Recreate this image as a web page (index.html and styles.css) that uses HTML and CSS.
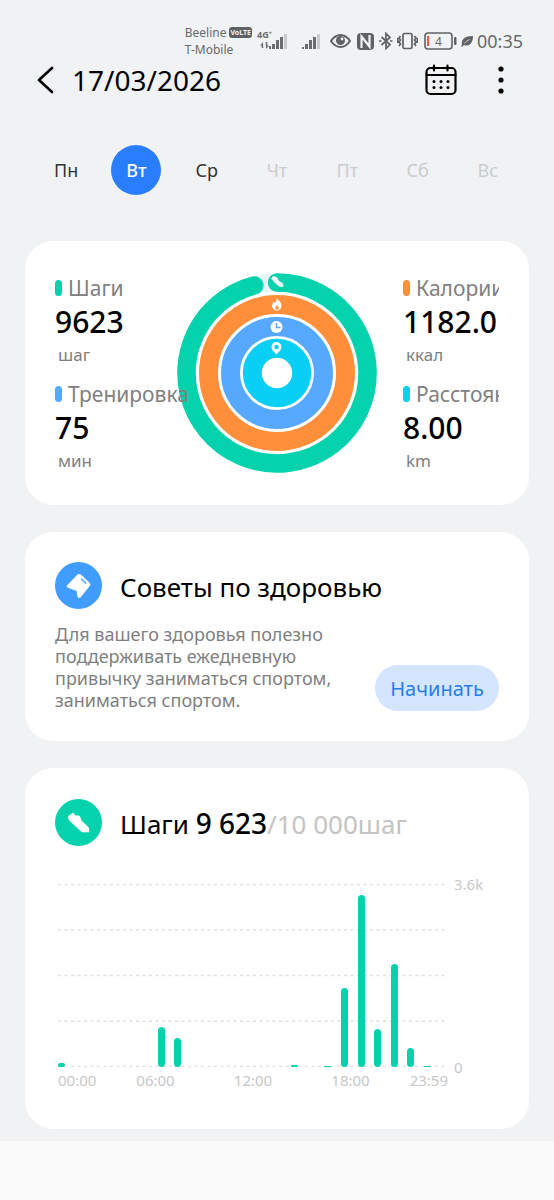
FILE: index.html
```html
<!DOCTYPE html>
<html lang="ru">
<head>
<meta charset="utf-8">
<meta name="viewport" content="width=device-width, initial-scale=1">
<title>Активность</title>
<link rel="stylesheet" href="styles.css">
</head>
<body>
<div class="screen">
  <div class="status">
    <div class="carriers">
      <div class="carrier">Beeline <span class="volte">VoLTE</span></div>
      <div class="carrier">T-Mobile</div>
    </div>
    <svg class="signal-main" width="32" height="24" viewBox="0 0 32 24" fill="#6b6c6e">
      <text class="net-label" x="0" y="9">4G⁺</text>
      <path d="M6 13l-3 3.500h1.700v2.500h1.600zM9 20l3-3.500h-1.700v-3.500H8.700z"/>
      <rect x="12" y="17" width="2" height="3"/><rect x="15" y="15" width="3" height="5"/><rect x="19" y="11" width="3" height="9"/><rect x="23" y="8" width="3" height="12"/><rect x="27" y="5" width="3" height="15" fill="#c9cacc"/>
    </svg>
    <svg class="signal-alt" width="18" height="24" viewBox="0 0 18 24" fill="#6b6c6e">
      <rect x="0" y="18" width="2" height="2"/><rect x="3" y="15" width="3" height="5"/><rect x="7" y="11" width="3" height="9"/><rect x="11" y="8" width="3" height="12"/><rect x="15" y="5" width="3" height="15" fill="#c9cacc"/>
    </svg>
    <svg class="eye" width="21" height="16" viewBox="0 0 21 16" fill="none" stroke="#606163" stroke-width="2"><path d="M1 8C4 3.500 7 2 10.500 2S17 3.500 20 8c-3 4.500-6 6-9.500 6S4 12.500 1 8z"/><circle cx="10.500" cy="7.500" r="4.500" fill="#606163" stroke="none"/><circle cx="12" cy="6" r="1.400" fill="#f1f2f4" stroke="none"/></svg>
    <svg class="nfc" width="17" height="17" viewBox="0 0 17 17"><rect x="0" y="0" width="17" height="17" rx="4" fill="#606163"/><path d="M4.500 15V3.500l8 10V2" fill="none" stroke="#f1f2f4" stroke-width="2.200"/></svg>
    <svg class="bt" width="14" height="18" viewBox="0 0 14 18" fill="none" stroke="#606163" stroke-width="1.700"><path d="M2.500 5l8.500 7.500-4 4V1.500l4 4L2.500 13M0 9h2.500M11 9h2.500"/></svg>
    <svg class="vibrate" width="21" height="18" viewBox="0 0 21 18" fill="none" stroke="#606163" stroke-width="1.700"><rect x="6" y="1.500" width="9" height="15" rx="1.500"/><path d="M3.500 4l-1.500 2 1.500 2L2 10l1.500 2L2 14M17.500 4l1.500 2-1.500 2 1.500 2-1.500 2 1.500 2M.700 6v5M20.400 6v5"/></svg>
    <svg class="battery" width="33" height="18" viewBox="0 0 33 18"><rect x="1" y="1" width="27" height="16" rx="3" fill="none" stroke="#606163" stroke-width="1.600"/><rect x="3" y="4" width="2" height="10" fill="#ec5a45"/><rect x="30" y="5" width="2.500" height="8" rx="1" fill="#606163"/><text class="charge" x="14.500" y="13.500" text-anchor="middle">4</text></svg>
    <svg class="leaf" width="12" height="12" viewBox="0 0 12 12"><path d="M1 10C0 4 4 1 12 1c0 7-4 11-9 9l-2 2-1-1z" fill="#606163"/><path d="M3.500 8.500C5 6.500 6.500 5.500 8.500 4.500" stroke="#f1f2f4" stroke-width=".8" fill="none"/></svg>
    <time class="clock">00:35</time>
  </div>

  <header class="topbar">
    <button class="icon-btn" aria-label="Назад"><svg width="18" height="30" viewBox="0 0 18 30" fill="none" stroke="#000" stroke-width="2.600" stroke-linecap="round" stroke-linejoin="round"><path d="M15 3L2 15l13 12"/></svg></button>
    <h1 class="date">17/03/2026</h1>
    <button class="icon-btn calendar" aria-label="Календарь"><svg width="32" height="32" viewBox="0 0 32 32"><g fill="none" stroke="#000" stroke-width="2.200" stroke-linecap="round"><rect x="1.500" y="4" width="29" height="26" rx="4"/><path d="M1.500 11h29M9 1.500v5M22.500 1.500v5"/></g><g><circle cx="9" cy="17.500" r="1.500"/><circle cx="16" cy="17.500" r="1.500"/><circle cx="23" cy="17.500" r="1.500"/><circle cx="9" cy="23.500" r="1.500"/><circle cx="16" cy="23.500" r="1.500"/><circle cx="23" cy="23.500" r="1.500"/></g></svg></button>
    <button class="icon-btn" aria-label="Ещё"><svg width="6" height="30" viewBox="0 0 6 30"><circle cx="3" cy="4" r="2.600"/><circle cx="3" cy="15" r="2.600"/><circle cx="3" cy="26" r="2.600"/></svg></button>
  </header>

  <nav class="week">
    <button class="day">Пн</button>
    <button class="day active" aria-current="date">Вт</button>
    <button class="day">Ср</button>
    <button class="day" disabled>Чт</button>
    <button class="day" disabled>Пт</button>
    <button class="day" disabled>Сб</button>
    <button class="day" disabled>Вс</button>
  </nav>

  <main class="cards">
    <section class="card summary">
      <div class="metrics">
        <div class="metric"><div class="label"><i class="mark green"></i>Шаги</div><div class="value">9623</div><div class="unit">шаг</div></div>
        <div class="metric"><div class="label"><i class="mark blue"></i>Тренировка</div><div class="value">75</div><div class="unit">мин</div></div>
      </div>
      <svg class="rings" viewBox="0 0 200 200">
        <g fill="none">
          <circle cx="100" cy="100" r="90.500" stroke="#e4f6f5" stroke-width="18"/>
          <path d="M100 9.500A90.500 90.500 0 1 1 77.300 12.400" stroke="#04d2ad" stroke-width="18.500" stroke-linecap="round"/>
          <circle cx="100" cy="100" r="68.500" stroke="#ff8f3a" stroke-width="19"/>
          <circle cx="100" cy="100" r="46.500" stroke="#57a8ff" stroke-width="19"/>
          <circle cx="100" cy="100" r="24.700" stroke="#0acff5" stroke-width="19"/>
        </g>
        <path d="M94.500 5.500l2-2 1.500.800 1.500 0 2 3.700 4 2.500.5 3-4-.5-3.500-3z" fill="#fff" stroke="#fff" stroke-linejoin="round"/>
        <path d="M99.500 25.500c3 2 5 4.500 5 7.500a4.700 4.700 0 0 1-9.400 0c0-2 1-3 1.400-4.500l1.500 1.500c1-1 1.500-3 1.500-4.500z" fill="#fff"/><path d="M100 32l1.800 3a1.800 1.800 0 1 1-3.600 0z" fill="#ff8f3a"/>
        <circle cx="99.500" cy="54" r="6" fill="#fff"/><path d="M99.500 50v4.500h4" stroke="#57a8ff" stroke-width="1.500" fill="none"/>
        <path d="M99.500 69a5 5 0 0 1 5 5c0 3-3 5-5 7.500-2-2.500-5-4.500-5-7.500a5 5 0 0 1 5-5z" fill="#fff"/><circle cx="99.500" cy="74" r="2.200" fill="#0acff5"/>
      </svg>
      <div class="metrics clipped">
        <div class="metric"><div class="label"><i class="mark orange"></i>Калории</div><div class="value">1182.0</div><div class="unit">ккал</div></div>
        <div class="metric"><div class="label"><i class="mark cyan"></i>Расстояние</div><div class="value">8.00</div><div class="unit">km</div></div>
      </div>
    </section>

    <section class="card tips">
      <div class="card-head">
        <svg class="badge" viewBox="0 0 46 46"><circle cx="23" cy="23" r="23" fill="#409cfd"/><path d="M22 13q1.500-1.500 3-.3l8.500 8q1 1 .3 2.300L25 34q-2 1.500-2.500-.5L21.500 28l-8-3q-2.500-.8-1-2.200z" fill="#fff" stroke="#fff" stroke-linejoin="round"/><path d="M25.500 16.500l5 4.500" stroke="#409cfd" stroke-width="1.300"/></svg>
        <h2 class="title">Советы по здоровью</h2>
      </div>
      <div class="tip-row">
        <p class="tip">Для вашего здоровья полезно поддерживать ежедневную привычку заниматься спортом, заниматься спортом.</p>
        <button class="start">Начинать</button>
      </div>
    </section>

    <section class="card steps">
      <div class="card-head">
        <svg class="badge" viewBox="0 0 46 46"><circle cx="23" cy="23" r="23" fill="#04d2ad"/><path d="M13 17.500l4.500-3.500 2 2.500 4.500.5 1.500 4.500 7 6.500.5 4-6.500 0-4.500-4-8-7.500z" fill="#fff" stroke="#fff" stroke-linejoin="round"/></svg>
        <h2 class="title">Шаги <b class="count">9 623</b><span class="goal">/10 000шаг</span></h2>
      </div>
      <div class="chart">
        <div class="plot">
          <svg class="gridlines" aria-hidden="true"><line x1="0" x2="100%" y1="0.500" y2="0.500"/><line x1="0" x2="100%" y1="25%" y2="25%"/><line x1="0" x2="100%" y1="50%" y2="50%"/><line x1="0" x2="100%" y1="75%" y2="75%"/><line x1="0" x2="100%" y1="99.700%" y2="99.700%"/></svg>
          <i class="bar" style="height:2%"></i><i class="bar"></i><i class="bar"></i><i class="bar"></i><i class="bar"></i><i class="bar"></i>
          <i class="bar" style="height:22%"></i><i class="bar" style="height:16%"></i><i class="bar"></i><i class="bar"></i><i class="bar"></i><i class="bar"></i>
          <i class="bar"></i><i class="bar"></i><i class="bar" style="height:1%"></i><i class="bar"></i><i class="bar" style="height:.5%"></i><i class="bar" style="height:43%"></i>
          <i class="bar" style="height:94%"></i><i class="bar" style="height:21%"></i><i class="bar" style="height:56.500%"></i><i class="bar" style="height:10.500%"></i><i class="bar" style="height:.5%"></i><i class="bar"></i>
        </div>
        <div class="scale"><span>3.6k</span><span>0</span></div>
        <div class="hours"><span>00:00</span><span>06:00</span><span>12:00</span><span>18:00</span><span>23:59</span></div>
      </div>
    </section>
  </main>
  <footer class="bottom"></footer>
</div>
</body>
</html>
```
FILE: styles.css
```css
* { box-sizing: border-box; }
body {
  margin: 0;
  background: #f1f2f4;
  color: #000;
  font-family: "Noto Sans", "Open Sans", sans-serif;
}
button {
  border: 0;
  padding: 0;
  background: none;
  color: inherit;
  font: inherit;
}
svg { display: block; flex: none; }
h1, h2, p { margin: 0; font-weight: 400; }

.screen { display: flex; flex-direction: column; min-height: 100vh; }

.status {
  display: flex;
  justify-content: flex-end;
  align-items: center;
  height: 36px;
  margin-top: 23px;
  padding-right: 31px;
  color: #68696b;
}
.carriers { font-size: 12px; line-height: 17px; margin-right: 5px; }
.carrier { display: flex; align-items: center; gap: 3px; }
.volte {
  padding: 0 1px;
  border-radius: 3px;
  background: #606163;
  color: #f1f2f4;
  font-size: 7px;
  font-weight: 700;
  line-height: 11px;
}
.net-label { font-size: 9px; font-weight: 700; }
.signal-alt { margin-left: 13px; }
.eye { margin-left: 10px; }
.nfc { margin-left: 6px; }
.bt { margin-left: 5px; }
.vibrate { margin-left: 4px; }
.battery { margin-left: 6px; }
.charge { font-size: 12px; fill: #68696b; }
.leaf { margin-left: 4px; }
.clock { margin-left: 4px; font-size: 18px; }

.topbar {
  display: flex;
  align-items: center;
  gap: 17px;
  height: 42px;
  padding: 0 50px 0 37px;
}
.date { flex: 1; font-size: 28px; line-height: 42px; }
.calendar { margin-right: 24px; }

.week {
  display: grid;
  grid-template-columns: repeat(7, 1fr);
  justify-items: center;
  margin: 44px 31px 0;
}
.day {
  width: 50px;
  height: 50px;
  border-radius: 50%;
  color: #333;
  font-size: 18px;
}
.day:disabled { color: #cbccce; }
.day.active { background: #297dff; color: #fff; font-weight: 500; }

.cards { display: grid; gap: 27px; padding: 46px 25px 12px; }
.card { padding: 30px; border-radius: 28px; background: #fff; }

.summary {
  display: grid;
  grid-template-columns: minmax(0, 1fr) 200px minmax(0, 1fr);
  align-items: center;
}
.rings { width: 100%; }
.metrics { position: relative; z-index: 1; }
.clipped { margin-left: 26px; overflow: hidden; }
.metric { height: 106px; white-space: nowrap; }
.metric:last-child { height: 98px; }
.label { display: flex; align-items: center; gap: 6px; color: #808080; font-size: 21px; line-height: 34px; }
.mark { flex: none; width: 7px; height: 16px; border-radius: 4px; }
.green { background: #04d2ad; }
.blue { background: #57a8ff; }
.orange { background: #ff8f3a; }
.cyan { background: #0acff5; }
.value { font-size: 30px; font-weight: 500; line-height: 34px; }
.unit { padding-left: 3px; color: #808080; font-size: 17px; line-height: 32px; }

.card-head { display: flex; align-items: center; gap: 18px; }
.badge { width: 47px; height: 47px; }
.title { padding-top: 3px; font-size: 26px; line-height: 44px; white-space: nowrap; }
.count { font-weight: 500; font-size: 28px; }
.goal { color: #c4c4c4; }

.tip-row { display: flex; align-items: flex-end; justify-content: space-between; margin-top: 14px; }
.tip { width: 300px; color: #808080; font-size: 18px; line-height: 22px; }
.start {
  width: 124px;
  height: 46px;
  border-radius: 23px;
  background: #d4e5ff;
  color: #297de8;
  font-size: 20px;
}

.chart {
  display: grid;
  grid-template-columns: 1fr 45px;
  column-gap: 6px;
  margin: 38px 0 9px 3px;
  color: #c8c8c8;
  font-size: 15px;
}
.plot {
  position: relative;
  display: flex;
  align-items: flex-end;
  justify-content: space-between;
  height: 183px;
}
.gridlines { position: absolute; inset: 0; width: 100%; height: 100%; }
.gridlines line { stroke: #e0e0e0; stroke-width: 1.5; stroke-dasharray: 3 3.5; }
.bar { position: relative; width: 7px; height: 0; border-radius: 4px; background: #04d2ad; }
.scale { display: flex; flex-direction: column; justify-content: space-between; margin: -10px 0; line-height: 20px; }
.hours {
  display: grid;
  grid-template-columns: 1fr 2fr 2fr 2fr 1fr;
  padding-top: 3px;
  line-height: 20px;
  text-align: center;
}
.hours span:first-child { text-align: left; }
.hours span:last-child { text-align: right; }

.bottom { flex: 1; min-height: 60px; background: #fafafa; }
```
